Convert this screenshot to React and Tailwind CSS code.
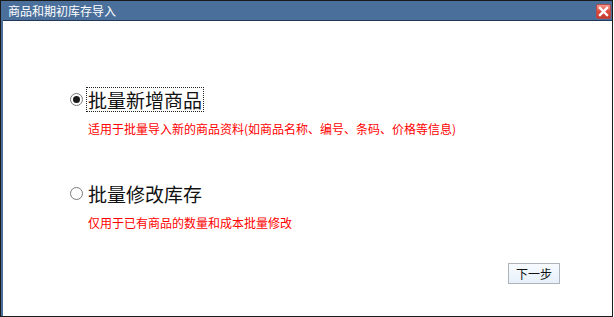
export default function App() {
  const options = [
    {
      label: "批量新增商品",
      desc: "适用于批量导入新的商品资料(如商品名称、编号、条码、价格等信息)",
      checked: true,
    },
    {
      label: "批量修改库存",
      desc: "仅用于已有商品的数量和成本批量修改",
      checked: false,
    },
  ];

  return (
    <div className="w-[613px] h-[317px] border border-[#1a1a1a] bg-[#4a6f9b] flex flex-col font-['Noto_Sans_CJK_SC',sans-serif]">
      {/* title bar */}
      <div className="h-[19px] flex items-center justify-between pl-[7px] pr-[1px]">
        <span className="text-white text-[12px] leading-[19px]">商品和期初库存导入</span>
        <div className="w-[15px] h-[15px] mt-[2px] rounded-[2px] border border-[#b94a4a] bg-gradient-to-b from-[#f29a90] via-[#dd4a3e] to-[#c23a2f] flex items-center justify-center">
          <svg width="11" height="11" viewBox="0 0 11 11">
            <path d="M2 2 L9 9 M9 2 L2 9" stroke="#fff" strokeWidth="2.4" strokeLinecap="square" />
          </svg>
        </div>
      </div>

      {/* body */}
      <div className="flex-1 ml-[2px] bg-white border-t border-[#22385a] flex flex-col pl-[67px] pt-[66px]">
        {options.map((opt, i) => (
          <div key={i} className={i === 0 ? "" : "mt-[44px]"}>
            <div className="flex items-center gap-[3px]">
              <span className="w-[13px] h-[13px] rounded-full border border-[#7a7a7a] bg-white flex items-center justify-center">
                {opt.checked && <span className="w-[7px] h-[7px] rounded-full bg-[#1a1a1a]" />}
              </span>
              <span
                className={
                  "px-[1px] text-[19px] leading-[23px] text-[#111] border border-dotted " +
                  (opt.checked ? "border-[#222]" : "border-transparent")
                }
              >
                {opt.label}
              </span>
            </div>
            <div className="ml-[18px] mt-[9px] text-[12px] leading-[16px] text-[#ff0000]">{opt.desc}</div>
          </div>
        ))}

        <div className="flex-1 flex items-end justify-end pr-[52px] pb-[32px]">
          <button className="w-[52px] h-[21px] border border-[#aeb4ba] bg-gradient-to-b from-[#f7fbff] to-[#e6f0fa] text-[12px] leading-[19px] text-[#111]">
            下一步
          </button>
        </div>
      </div>
    </div>
  );
}
